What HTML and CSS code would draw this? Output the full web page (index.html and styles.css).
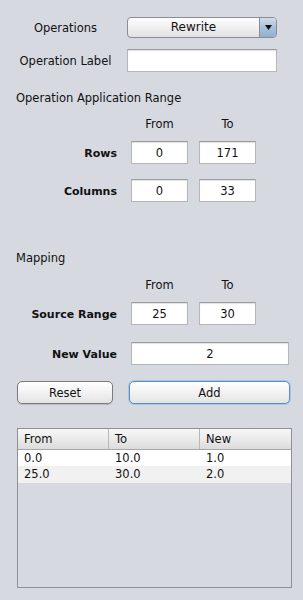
FILE: index.html
```html
<!DOCTYPE html>
<html lang="en">
<head>
    <meta charset="UTF-8">
    <meta name="viewport" content="width=device-width, initial-scale=1.0">
    <title>Operation Editor</title>
    <link rel="stylesheet" href="styles.css">
</head>
<body>

<div class="panel">
    <div class="top-form">
        <label class="top-label">Operations</label>
        <div class="combo">
            <span class="combo-text">Rewrite</span>
            <span class="combo-arrow">
                <svg width="7" height="5" viewBox="0 0 7 5"><polygon points="0,0 7,0 3.5,5" fill="#111"/></svg>
            </span>
        </div>
        <label class="top-label">Operation Label</label>
        <input type="text" class="field wide-field" value="">
    </div>

    <div class="section-title range-title">Operation Application Range</div>

    <div class="col-heads">
        <span class="col-head">From</span>
        <span class="col-head">To</span>
    </div>
    <div class="range-grid">
        <span class="row-label">Rows</span>
        <input type="text" class="field" value="0">
        <input type="text" class="field" value="171">

        <span class="row-label">Columns</span>
        <input type="text" class="field" value="0">
        <input type="text" class="field" value="33">
    </div>

    <div class="section-title mapping-title">Mapping</div>

    <div class="col-heads">
        <span class="col-head">From</span>
        <span class="col-head">To</span>
    </div>
    <div class="range-grid mapping-grid">
        <span class="row-label">Source Range</span>
        <input type="text" class="field" value="25">
        <input type="text" class="field" value="30">

        <span class="row-label">New Value</span>
        <input type="text" class="field span-two" value="2">
    </div>

    <div class="button-row">
        <button class="btn reset-btn">Reset</button>
        <button class="btn add-btn">Add</button>
    </div>

    <div class="table-box">
        <div class="table-head">
            <div class="cell">From</div>
            <div class="cell">To</div>
            <div class="cell">New</div>
        </div>
        <div class="table-row">
            <div class="cell">0.0</div>
            <div class="cell">10.0</div>
            <div class="cell">1.0</div>
        </div>
        <div class="table-row alt">
            <div class="cell">25.0</div>
            <div class="cell">30.0</div>
            <div class="cell">2.0</div>
        </div>
    </div>
</div>

</body>
</html>
```

FILE: styles.css
```css
body {
    margin: 0;
    background-color: #d6d9e0;
    font-family: "DejaVu Sans", sans-serif;
    font-size: 11.5px;
    line-height: 14px;
    color: #111;
}
.panel {
    width: 303px;
    height: 600px;
    box-sizing: border-box;
    padding-top: 17px;
}
.top-form {
    display: grid;
    grid-template-columns: 123px 150px;
    padding-left: 4px;
    row-gap: 11px;
    align-items: center;
}
.top-label {
    text-align: center;
}
.combo {
    display: flex;
    height: 21px;
    box-sizing: border-box;
    border: 1px solid #8a8c90;
    border-radius: 4px;
    background: linear-gradient(#fdfdfd, #f0f0f0 50%, #e2e2e2);
    overflow: hidden;
}
.combo-text {
    flex: 1;
    text-align: center;
    line-height: 19px;
    font-size: 12px;
}
.combo-arrow {
    width: 16px;
    display: flex;
    align-items: center;
    justify-content: center;
    border-left: 1px solid #7f8ea0;
    background: linear-gradient(#cfdcea, #a9c0d9 50%, #93afcf);
}
.field {
    height: 23px;
    box-sizing: border-box;
    border: 1px solid #b4b6ba;
    border-top-color: #9a9ca0;
    background: #fff;
    box-shadow: inset 0 1px 1px rgba(0, 0, 0, 0.12);
    font-family: "DejaVu Sans", sans-serif;
    font-size: 11.5px;
    text-align: center;
    padding: 0;
    margin: 0;
    color: #111;
}
.wide-field {
    width: 150px;
}
.section-title {
    padding-left: 16px;
}
.range-title {
    margin-top: 19px;
}
.col-heads {
    display: flex;
    gap: 11px;
    padding-left: 131px;
    margin-top: 12px;
}
.col-head {
    width: 57px;
    text-align: center;
}
.range-grid {
    display: grid;
    grid-template-columns: 120px 57px 57px;
    grid-auto-rows: 23px;
    column-gap: 11px;
    row-gap: 15px;
    align-items: center;
    margin-top: 10px;
}
.row-label {
    text-align: right;
    padding-right: 3px;
    padding-top: 3px;
    font-weight: bold;
    font-size: 11px;
}
.range-grid .field {
    width: 57px;
}
.range-grid .field.span-two {
    grid-column: span 2;
    width: 158px;
}
.mapping-title {
    margin-top: 49px;
}
.mapping-title + .col-heads {
    margin-top: 13px;
}
.mapping-grid {
    row-gap: 17px;
}
.button-row {
    display: flex;
    margin-top: 16px;
    padding-left: 17px;
    gap: 16px;
}
.btn {
    height: 23px;
    box-sizing: border-box;
    border: 1px solid #7a7c80;
    border-radius: 5px;
    background: linear-gradient(#ffffff, #f2f2f2 50%, #e3e3e3);
    font-family: "DejaVu Sans", sans-serif;
    font-size: 11.5px;
    color: #111;
    padding: 0;
    box-shadow: 0 1px 1px rgba(0, 0, 0, 0.15);
}
.reset-btn {
    width: 96px;
}
.add-btn {
    width: 161px;
    border-color: #5d8cc0;
    box-shadow: 0 0 0 1px #a9c6e6;
}
.table-box {
    margin: 24px 0 0 17px;
    width: 275px;
    height: 160px;
    box-sizing: border-box;
    border: 1px solid #8f9196;
    background: #d6d9e0;
}
.table-head {
    display: grid;
    grid-template-columns: 91px 91px 1fr;
    height: 20px;
    border-bottom: 1px solid #a4a6aa;
    background: linear-gradient(#f7f7f7, #e8e8e8 60%, #dcdcdc);
}
.table-head .cell {
    line-height: 20px;
    border-right: 1px solid #b8b9bc;
}
.table-head .cell:last-child {
    border-right: none;
}
.table-row {
    display: grid;
    grid-template-columns: 91px 91px 1fr;
    height: 16px;
    background: #fff;
}
.table-row.alt {
    background: #f1f1f1;
    height: 17px;
}
.cell {
    padding-left: 6px;
    line-height: 16px;
}
```
